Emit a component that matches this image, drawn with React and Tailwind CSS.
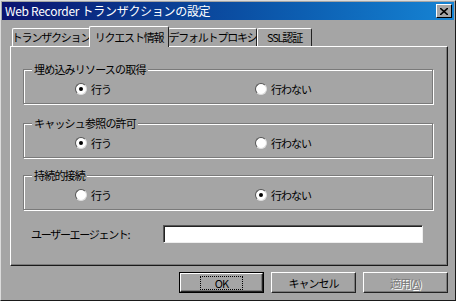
const jp = { fontFamily: '"Noto Sans CJK JP", "Liberation Sans", sans-serif' };

function Radio({ checked, label }) {
  return (
    <div className="flex items-center gap-[4px]">
      <span className="relative w-[12px] h-[12px] rounded-full bg-white border border-t-[#555] border-l-[#555] border-r-[#ddd] border-b-[#ddd] flex items-center justify-center">
        {checked && <span className="w-[4px] h-[4px] rounded-full bg-black" />}
      </span>
      <span className="text-[11px] leading-none tracking-[-1px]">{label}</span>
    </div>
  );
}

function Group({ title, value, className }) {
  return (
    <div className={`relative ml-[12px] w-[410px] h-[35px] border border-[#7a7a7a] shadow-[inset_1px_1px_0_#fff,1px_1px_0_#fff] ${className}`}>
      <span className="absolute -top-[8px] left-[8px] px-[2px] bg-[#a5a5a5] text-[11px] leading-[14px] tracking-[-0.8px]">
        {title}
      </span>
      <div className="flex pt-[13px]">
        <div className="w-[180px] pl-[51px]">
          <Radio checked={value === 'yes'} label="行う" />
        </div>
        <div className="pl-[51px]">
          <Radio checked={value === 'no'} label="行わない" />
        </div>
      </div>
    </div>
  );
}

function Button({ children, isDefault, disabled }) {
  return (
    <div
      className={`w-[85px] h-[21px] flex items-center justify-center ${
        isDefault ? 'border border-black' : ''
      }`}
    >
      <div className="w-full h-full flex items-center justify-center bg-[#a5a5a5] border border-t-white border-l-white border-r-[#222] border-b-[#222] shadow-[inset_-1px_-1px_0_#7a7a7a]">
        <span
          className={`text-[11px] leading-[12px] tracking-[-1px] px-[14px] ${
            isDefault ? 'outline outline-1 outline-dotted outline-black' : ''
          } ${disabled ? 'text-[#7a7a7a] [text-shadow:1px_1px_0_#fff]' : ''}`}
        >
          {children}
        </span>
      </div>
    </div>
  );
}

export default function App() {
  const tabs = [
    { name: 'トランザクション', w: 'w-[78px]' },
    { name: 'リクエスト情報', w: 'w-[78px]', active: true },
    { name: 'デフォルトプロキシ', w: 'w-[89px]' },
    { name: 'SSL認証', w: 'w-[55px]' },
  ];

  return (
    <div
      className="w-[456px] h-[301px] bg-[#a5a5a5] text-black border border-t-[#dcdcdc] border-l-[#dcdcdc] border-r-[#1a1a1a] border-b-[#1a1a1a] p-[1px] overflow-hidden"
      style={jp}
    >
      {/* Title bar */}
      <div className="h-[18px] flex items-center justify-between bg-gradient-to-r from-[#0c1270] to-[#1684d4] pl-[3px] pr-[2px]">
        <span className="text-white text-[12px] leading-none tracking-[-0.3px]">
          Web Recorder トランザクションの設定
        </span>
        <div className="w-[16px] h-[14px] bg-[#a5a5a5] border border-t-white border-l-white border-r-black border-b-black flex items-center justify-center">
          <svg width="8" height="7" viewBox="0 0 8 7">
            <path d="M0 0 L8 7 M8 0 L0 7" stroke="black" strokeWidth="1.6" />
          </svg>
        </div>
      </div>

      {/* Tabs */}
      <div className="flex items-end h-[26px] pl-[10px]">
        {tabs.map((t) => (
          <div
            key={t.name}
            className={`${t.w} flex items-center justify-center bg-[#a5a5a5] border-t border-l border-r border-t-white border-l-white border-r-[#222] rounded-t-[2px] ${
              t.active ? 'h-[21px] -mx-[1px] relative z-10 -mb-[1px] w-[80px]' : 'h-[18px]'
            }`}
          >
            <span className="text-[11px] leading-none tracking-[-1.2px] whitespace-nowrap">{t.name}</span>
          </div>
        ))}
      </div>

      {/* Panel */}
      <div className="ml-[8px] w-[438px] h-[220px] border border-t-white border-l-white border-r-[#1a1a1a] border-b-[#1a1a1a] shadow-[inset_-1px_-1px_0_#7a7a7a]">
        <Group className="mt-[22px]" title="埋め込みリソースの取得" value="yes" />
        <Group className="mt-[19px]" title="キャッシュ参照の許可" value="yes" />
        <Group className="mt-[17px]" title="持続的接続" value="no" />
        <div className="flex items-center mt-[15px] ml-[20px]">
          <span className="w-[132px] text-[11px] leading-none tracking-[-1.3px]">ユーザーエージェント:</span>
          <div className="w-[260px] h-[18px] bg-white border border-t-[#555] border-l-[#555] border-r-[#eee] border-b-[#eee] shadow-[inset_1px_1px_0_#222]" />
        </div>
      </div>

      {/* Buttons */}
      <div className="flex justify-end gap-[7px] mt-[6px] pr-[6px]">
        <Button isDefault>OK</Button>
        <Button>キャンセル</Button>
        <Button disabled>
          適用(<span className="underline">A</span>)
        </Button>
      </div>
    </div>
  );
}
